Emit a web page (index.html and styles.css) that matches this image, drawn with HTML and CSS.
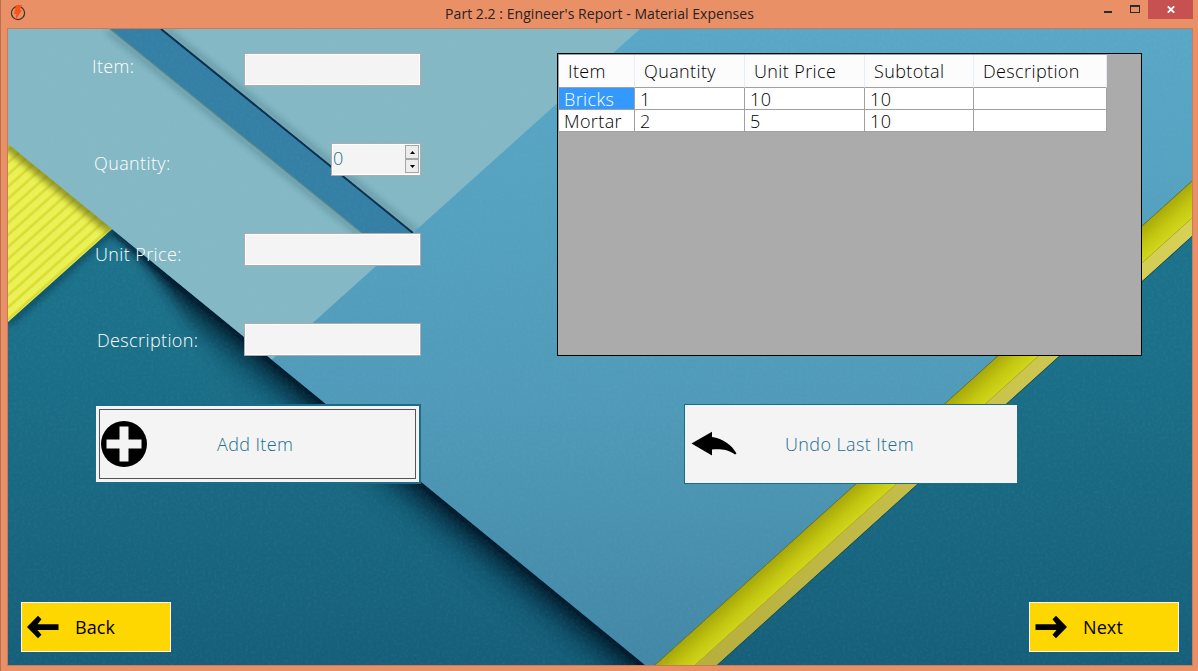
FILE: index.html
```html
<!DOCTYPE html>
<html lang="en">
<head>
<meta charset="utf-8">
<title>Part 2.2 : Engineer's Report - Material Expenses</title>
<link rel="stylesheet" href="styles.css">
</head>
<body>
<div class="window">
  <header class="titlebar">
    <svg class="app-icon" width="16" height="18" viewBox="0 0 16 18"><circle cx="8" cy="9" r="6.6" fill="none" stroke="#41302b" stroke-width="1.2"/><path d="M6 1h6L9.800 6H12L5.200 16.500 6.500 10H4z" fill="#fa5316"/></svg>
    <h1 class="title">Part 2.2 : Engineer's Report - Material Expenses</h1>
    <div class="controls">
      <span class="minimize"></span>
      <span class="maximize"></span>
      <span class="close"><svg width="8" height="7" viewBox="0 0 8 7"><path d="M.8.3l6.400 6.400M7.200.3L.8 6.700" stroke="#fff" stroke-width="1.800"/></svg></span>
    </div>
  </header>
  <main class="client">
    <svg class="wallpaper" width="1184" height="636" viewBox="8 29 1184 636">
      <defs>
        <linearGradient id="blue" x1="0" y1="0" x2="0" y2="1"><stop offset="0" stop-color="#59a7c7"/><stop offset=".6" stop-color="#4f9ab8"/><stop offset="1" stop-color="#4287a6"/></linearGradient>
        <linearGradient id="teal" x1="0" y1="0" x2="0" y2="1"><stop offset="0" stop-color="#1f7690"/><stop offset=".5" stop-color="#1b7089"/><stop offset="1" stop-color="#165f7a"/></linearGradient>
        <linearGradient id="fold" gradientUnits="userSpaceOnUse" x1="998" y1="355" x2="1017" y2="376"><stop offset="0" stop-color="#a6a608"/><stop offset=".55" stop-color="#c3c70e"/><stop offset="1" stop-color="#d2d71b"/></linearGradient>
        <linearGradient id="flap" x1="1" y1="0" x2="0" y2="1"><stop offset="0" stop-color="#d8d156"/><stop offset="1" stop-color="#b6af3c"/></linearGradient>
        <linearGradient id="cast" gradientUnits="userSpaceOnUse" x1="327" y1="404" x2="295" y2="443"><stop offset="0" stop-color="#021827" stop-opacity=".95"/><stop offset=".3" stop-color="#042538" stop-opacity=".65"/><stop offset=".65" stop-color="#0a3c52" stop-opacity=".22"/><stop offset="1" stop-color="#0a3c52" stop-opacity="0"/></linearGradient>
        <linearGradient id="rib" gradientUnits="userSpaceOnUse" x1="8" y1="322" x2="14" y2="328.700" spreadMethod="repeat"><stop offset="0" stop-color="#e9f056"/><stop offset=".5" stop-color="#eef352"/><stop offset=".82" stop-color="#d5d92f"/><stop offset="1" stop-color="#e9f056"/></linearGradient>
        <filter id="soft" x="-10%" y="-10%" width="120%" height="120%"><feGaussianBlur stdDeviation="3"/></filter>
        <filter id="softer" x="-10%" y="-10%" width="120%" height="120%"><feGaussianBlur stdDeviation="7"/></filter>
        <filter id="grain" x="0" y="0" width="100%" height="100%"><feTurbulence type="fractalNoise" baseFrequency=".35" numOctaves="3" seed="4"/><feColorMatrix values="0 0 0 0 .5  0 0 0 0 .6  0 0 0 0 .65  1.200 0 0 0 -.5"/></filter>
        <clipPath id="corner"><path d="M8 144L112 229 8 322z"/></clipPath>
        <clipPath id="below"><path d="M8 322L112 229 645 665H8z"/></clipPath>
        <clipPath id="sheet"><path d="M8 29H640L272 359.500 8 144z"/></clipPath>
      </defs>
      <rect x="8" y="29" width="1184" height="636" fill="url(#teal)"/>
      <g clip-path="url(#below)">
        <path d="M112 210L700 690H480L230 385z" fill="url(#cast)" filter="url(#softer)"/>
        <path d="M112 229L645 665" stroke="#03192a" stroke-width="10" opacity=".7" filter="url(#soft)"/>
        <path d="M8 324L112 231" stroke="#063046" stroke-width="7" opacity=".55" filter="url(#soft)"/>
      </g>
      <path d="M8 29H1192V181L655 665H645L8 144z" fill="url(#blue)"/>
      <path d="M8 29H640L272 359.500 8 144z" fill="#83b8c4"/>
      <g clip-path="url(#sheet)">
        <path d="M108 31L362 236M166 29L418 233" stroke="#244f5a" stroke-width="4" opacity=".4" filter="url(#soft)"/>
        <path d="M110 29H162L414 233H362z" fill="#347fa5"/>
        <path d="M110 29L362 233" stroke="#58898a" stroke-width="1.200"/>
        <path d="M161 29L413 233" stroke="#0b2e4d" stroke-width="2"/>
      </g>
      <g clip-path="url(#corner)">
        <rect x="8" y="140" width="110" height="190" fill="url(#rib)"/>
        <path d="M8 144L112 229" stroke="#686b0c" stroke-width="12" opacity=".65" filter="url(#soft)"/>
      </g>
      <path d="M1192 181L655 665H695L1192 218z" fill="url(#fold)"/>
      <path d="M1192 218L695 665H717L1192 236z" fill="url(#flap)"/>
      <path d="M1192 181L655 665" stroke="#65742c" stroke-width="1"/>
      <path d="M1192 218L695 665" stroke="#b8b01e" stroke-width="1"/>
      <path d="M1192 236.500L717 665.500" stroke="#174f5c" stroke-width="1"/>
      <rect x="8" y="29" width="1184" height="636" filter="url(#grain)" opacity=".1"/>
    </svg>

    <div class="content">
      <section class="upper">
        <form class="fields">
          <div class="row item"><label>Item:</label><span class="input"></span></div>
          <div class="row quantity"><label>Quantity:</label>
            <span class="input number">0
              <span class="spin">
                <span class="step"><svg width="5" height="3"><path d="M0 3L2.500 0 5 3z"/></svg></span>
                <span class="step"><svg width="5" height="3"><path d="M0 0H5L2.500 3z"/></svg></span>
              </span>
            </span>
          </div>
          <div class="row price"><label>Unit Price:</label><span class="input"></span></div>
          <div class="row description"><label>Description:</label><span class="input"></span></div>
        </form>
        <div class="grid">
          <table>
            <colgroup><col class="c1"><col class="c2"><col class="c3"><col class="c4"><col class="c5"></colgroup>
            <thead><tr><th>Item</th><th>Quantity</th><th>Unit Price</th><th>Subtotal</th><th>Description</th></tr></thead>
            <tbody>
              <tr><td class="selected">Bricks</td><td>1</td><td>10</td><td>10</td><td></td></tr>
              <tr><td>Mortar</td><td>2</td><td>5</td><td>10</td><td></td></tr>
            </tbody>
          </table>
        </div>
      </section>
      <section class="actions">
        <div class="btn add"><div class="focus">
          <svg width="46" height="46" viewBox="0 0 46 46"><circle cx="23" cy="23" r="23"/><path d="M18.500 5.500h9v13h13v9h-13v13h-9v-13h-13v-9h13z" fill="#f4f4f4"/></svg>
          <span class="add-text">Add Item</span>
        </div></div>
        <div class="btn undo">
          <svg class="undo-icon" width="46" height="26" viewBox="0 0 46 26"><path d="M.5 12.500L21 .8V6C32 7.500 41 14 45.500 22.500L44 23.500C37 18.500 30 18 21 18.500V24.500z"/></svg>
          <span class="undo-text">Undo Last Item</span>
        </div>
      </section>
      <nav class="nav">
        <div class="nav-btn"><svg width="32" height="24" viewBox="0 0 32 24"><path d="M0 12L11 .8l3.500 3.500L10.500 9.300H31.500v5.700H10.500l4 4.700L11 23.200z"/></svg><span>Back</span></div>
        <div class="nav-btn"><svg width="32" height="24" viewBox="0 0 32 24"><path d="M32 12L21 .8l-3.500 3.500 4 5H.5v5.700h21l-4 4.700 3.500 3.500z"/></svg><span>Next</span></div>
      </nav>
    </div>
  </main>
</div>
</body>
</html>
```

FILE: styles.css
```css
* { box-sizing: border-box; }
body { margin: 0; font-family: "Open Sans", "Noto Sans", sans-serif; font-weight: 320; font-size: 18px; letter-spacing: .38px; }
.window { width: 1198px; height: 671px; background: #e99067; border-left: 1px solid #b87050; display: flex; flex-direction: column; overflow: hidden; }
.titlebar { height: 28px; display: grid; grid-template-columns: 100px 1fr 100px; flex: none; }
.app-icon { margin: 4px 0 0 9px; }
.title { margin: 4px 0 0; text-align: center; font-size: 14px; line-height: 20px; font-weight: 400; letter-spacing: .04px; color: #2b211d; white-space: nowrap; }
.controls { display: flex; align-items: flex-start; justify-content: flex-end; padding-right: 5px; }
.minimize { width: 8px; height: 2px; margin: 11px 18px 0 0; background: #2a2a2a; flex: none; }
.maximize { width: 10px; height: 8px; margin: 5px 8px 0 0; border: 1px solid #2a2a2a; border-top-width: 2px; flex: none; }
.close { width: 45px; height: 19px; background: #c75050; display: flex; align-items: center; justify-content: center; flex: none; }
.client { width: 1186px; height: 638px; margin-left: 6px; border: 1px solid #c87a5a; position: relative; flex: none; }
.wallpaper { position: absolute; left: 0; top: 0; display: block; }
.content { position: relative; height: 636px; display: flex; flex-direction: column; }
.upper { display: flex; justify-content: space-between; padding: 24px 50px 0 84px; }
.fields { width: 329px; display: flex; flex-direction: column; gap: 57px; }
.row { display: flex; justify-content: space-between; height: 33px; color: #fff; }
.row label { line-height: 26px; height: 26px; white-space: nowrap; }
.quantity label { margin: 7px 0 0 2px; }
.price label { margin: 8px 0 0 3px; }
.description label { margin: 4px 0 0 5px; }
.input { width: 177px; height: 33px; background: #f4f4f4; border: 1px solid #adabb3; box-shadow: inset 0 0 0 1px #fff; }
.number { width: 90px; display: flex; justify-content: space-between; padding: 1px 1px 1px 1px; color: #1d6f95; line-height: 27px; }
.spin { display: flex; flex-direction: column; width: 14px; }
.step { height: 14px; border: 1px solid #a6a6a6; background: #ececec; display: flex; align-items: center; justify-content: center; }
.grid { width: 585px; height: 303px; background: #ababab; border: 1px solid #000; }
table { border-collapse: separate; border-spacing: 0; table-layout: fixed; width: 549px; border-top: 1px solid #a0a0a0; border-left: 1px solid #a0a0a0; color: #000; }
.c1 { width: 76px; }
.c2 { width: 110px; }
.c3 { width: 120px; }
.c4 { width: 109px; }
.c5 { width: 133px; }
th { height: 33px; padding: 0 0 0 9px; background: #fcfcfc; font-weight: 320; text-align: left; line-height: 31px; border-right: 1px solid #e5edf9; border-bottom: 1px solid #a0a0a0; white-space: nowrap; }
td { height: 22px; padding: 1px 0 0 5px; background: #fff; line-height: 20px; border-right: 1px solid #a0a0a0; border-bottom: 1px solid #a0a0a0; white-space: nowrap; }
.selected { background: #3399ff; color: #fff; }
.actions { display: flex; justify-content: space-between; padding: 48px 174px 0 86px; }
.btn { height: 80px; background: #f4f4f4; color: #1b6e8c; white-space: nowrap; }
.add { width: 327px; border: 2px solid #1b6c86; padding: 3px; }
.focus { height: 70px; border: 1px solid #555; display: flex; align-items: center; padding-left: 1px; }
.add-text { margin: 0 0 1px 70px; }
.undo { width: 334px; border: 1px solid #1b6c86; display: flex; align-items: center; padding-left: 6px; }
.undo-icon { filter: blur(.5px); }
.undo-text { margin: 0 0 0 48px; }
.nav { display: flex; justify-content: space-between; margin-top: auto; padding: 0 13px 13px; }
.nav-btn { width: 150px; height: 50px; border: 1px solid #fff; background: #ffd700; display: flex; align-items: center; padding-left: 5px; gap: 16px; color: #000; font-weight: 400; letter-spacing: .1px; }
```
